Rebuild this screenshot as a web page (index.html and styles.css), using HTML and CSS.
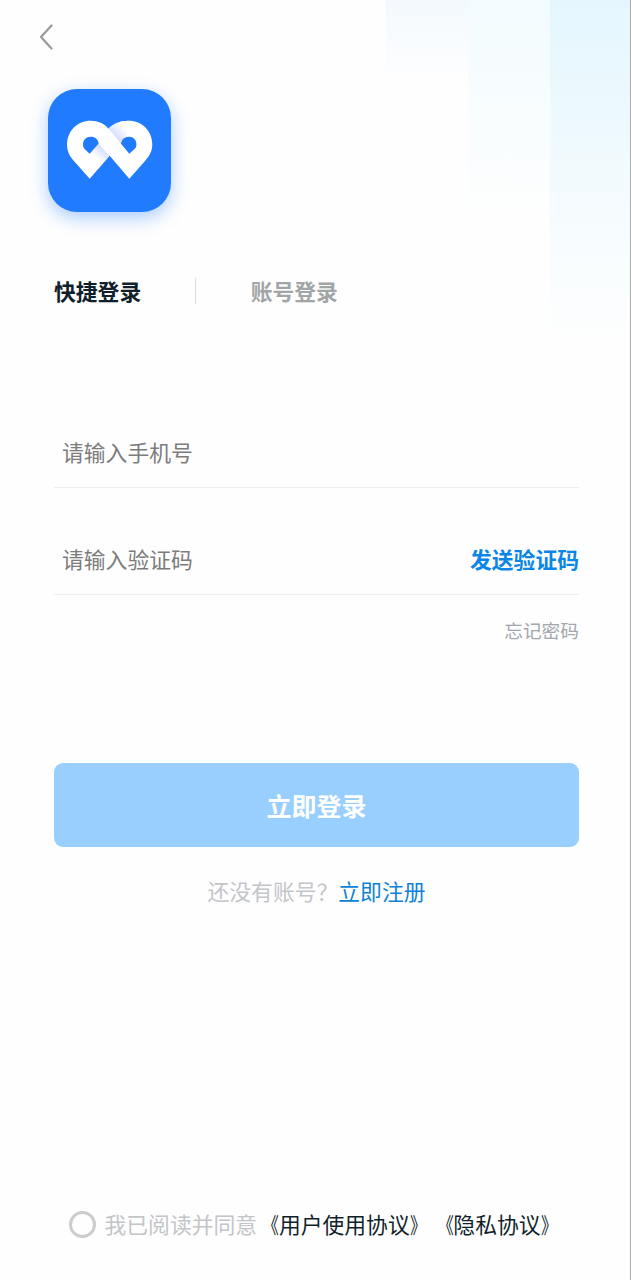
FILE: index.html
```html
<!DOCTYPE html>
<html lang="zh-CN">
<head>
    <meta charset="UTF-8">
    <meta name="viewport" content="width=device-width, initial-scale=1.0">
    <title>登录</title>
    <link rel="stylesheet" href="styles.css">
</head>
<body>
    <div class="page">
        <div class="stripes">
            <div class="stripe stripe-short"></div>
            <div class="stripe stripe-medium"></div>
            <div class="stripe stripe-long"></div>
        </div>
        <header class="header">
            <svg class="back" viewBox="0 0 16 28">
                <path d="M13.5 2.5 L3 14 L13.5 25.5" fill="none" stroke="#999" stroke-width="2.2" stroke-linecap="round" stroke-linejoin="round"/>
            </svg>
        </header>
        <div class="logo">
            <svg viewBox="0 0 123 123">
                <defs>
                    <linearGradient id="shade-right" gradientUnits="userSpaceOnUse" x1="65" y1="46" x2="75" y2="37">
                        <stop offset="0" stop-color="#d3defd"/>
                        <stop offset="1" stop-color="#fff"/>
                    </linearGradient>
                    <linearGradient id="shade-left" gradientUnits="userSpaceOnUse" x1="56" y1="60" x2="48" y2="69">
                        <stop offset="0" stop-color="#d3defd"/>
                        <stop offset="1" stop-color="#fff"/>
                    </linearGradient>
                </defs>
                <!-- two pins, the left one runs over the right one -->
                <path fill="#fff" d="M81.3 89.7 L61 66 L58 42.5 C64 35 71 31.8 80.7 31.8 C94 31.8 104.3 42 104.3 55.5 C104.3 62 101.5 67 97 72 Z"/>
                <path fill="#fff" d="M41.7 89.7 L25.5 71.5 C21.5 67 19 62 19 55.5 C19 42 29.5 31.8 42.5 31.8 C50 31.8 56 34.5 60.5 39.7 L61.3 67 Z"/>
                <path fill="url(#shade-right)" d="M60.8 39.8 C65.5 35 72 31.8 80.7 31.8 L79 48 L72.5 54 Z"/>
                <path fill="url(#shade-left)" d="M50.5 54.5 L61.3 67 L50 80 L41.7 64.7 Z"/>
                <path fill="#217bff" d="M41.7 64.7 L37.3 60.8 C36 59.5 35 58 35 55.5 C35 51 38 47.8 42.7 47.8 C47 47.8 50 50.5 50.7 54.5 Z"/>
                <path fill="#217bff" d="M81.3 64.7 L73 54.8 C73.5 51 76.5 47.8 81 47.8 C85.5 47.8 88.4 51 88.4 55.5 C88.4 58 87.5 59 86 60.5 Z"/>
            </svg>
        </div>
        <div class="tabs">
            <span class="tab active">快捷登录</span>
            <span class="divider"></span>
            <span class="tab">账号登录</span>
        </div>
        <form class="login-form">
            <div class="input-group">
                <input type="tel" placeholder="请输入手机号">
            </div>
            <div class="input-group">
                <input type="text" placeholder="请输入验证码">
                <span class="send-code">发送验证码</span>
            </div>
            <div class="forgot">忘记密码</div>
            <button class="btn" type="button">立即登录</button>
        </form>
        <div class="register">
            <span>还没有账号？</span><a class="register-link">立即注册</a>
        </div>
        <div class="agreement">
            <span class="radio"></span>
            <span class="agree-text">我已阅读并同意</span><a><span class="open">《</span>用户使用协议<span class="close">》</span></a><a><span class="open">《</span>隐私协议<span class="close">》</span></a>
        </div>
    </div>
</body>
</html>
```

FILE: styles.css
```css
* {
    box-sizing: border-box;
}
body {
    margin: 0;
    background-color: #fefefe;
    font-family: "Noto Sans CJK SC", sans-serif;
    font-size: 21.8px;
    line-height: 32px;
    color: #101f2b;
}
.page {
    position: relative;
    display: flex;
    flex-direction: column;
    height: 1280px;
    padding: 0 51px 40px 54px;
    border-right: 1px solid #aaa;
}
.stripes {
    position: absolute;
    top: 0;
    right: 0;
    display: flex;
    z-index: -1;
}
.stripe {
    width: 82px;
}
.stripe-short {
    height: 82px;
    background: linear-gradient(#f3f9fe, #fefefe);
}
.stripe-medium {
    height: 225px;
    background: linear-gradient(#f2fbfe, #fefefe);
}
.stripe-long {
    width: 80px;
    height: 350px;
    background: linear-gradient(#e5f6fe, #ecf9fe 30%, #f4fbfe 55%, #fefefe);
}
.header {
    height: 89px;
    padding-top: 23px;
    margin-left: -16px;
}
.back {
    display: block;
    width: 16px;
    height: 28px;
}
.logo {
    width: 123px;
    height: 123px;
    margin-left: -6px;
    border-radius: 29px;
    background-color: #217bff;
    box-shadow: 0 6px 18px rgba(33, 123, 255, 0.38);
}
.logo svg {
    display: block;
}
.tabs {
    display: flex;
    align-items: center;
    height: 32px;
    margin-top: 63px;
    font-weight: bold;
}
.tab {
    color: #a1a5a6;
}
.tab.active {
    color: #101f2b;
}
.divider {
    width: 1px;
    height: 26px;
    margin: 0 54.5px 0 54px;
    background-color: #ddd;
}
.login-form {
    margin-top: 74px;
}
.input-group {
    display: flex;
    align-items: flex-end;
    height: 107px;
    padding-bottom: 19px;
    border-bottom: 1px solid #eee;
}
.input-group input {
    flex: 1;
    min-width: 0;
    height: 32px;
    padding: 0 8px;
    border: none;
    outline: none;
    background: none;
    font: inherit;
}
.input-group input::placeholder {
    color: #7c7c7c;
}
.send-code {
    color: #0a86e8;
    font-weight: bold;
}
.forgot {
    margin-top: 19px;
    font-size: 18.7px;
    text-align: right;
    color: #a3a6ad;
}
.btn {
    display: block;
    width: 100%;
    height: 84px;
    margin-top: 117px;
    border: none;
    border-radius: 9px;
    background-color: #99cfff;
    color: #fff;
    font: bold 25px "Noto Sans CJK SC", sans-serif;
}
.register {
    margin-top: 28px;
    text-align: center;
    color: #c3c5c9;
}
.register-link {
    color: #0e82d8;
}
.agreement {
    display: flex;
    align-items: center;
    margin-top: auto;
    margin-left: 15px;
    white-space: nowrap;
}
.radio {
    width: 27px;
    height: 27px;
    margin-right: 8.5px;
    border: 3px solid #ccc;
    border-radius: 50%;
}
.agree-text {
    color: #c3c5c9;
}
.open,
.close {
    display: inline-block;
    text-spacing-trim: space-all;
    transform: scaleX(0.75);
}
.open {
    transform-origin: right;
}
.close {
    transform-origin: left;
}
```
